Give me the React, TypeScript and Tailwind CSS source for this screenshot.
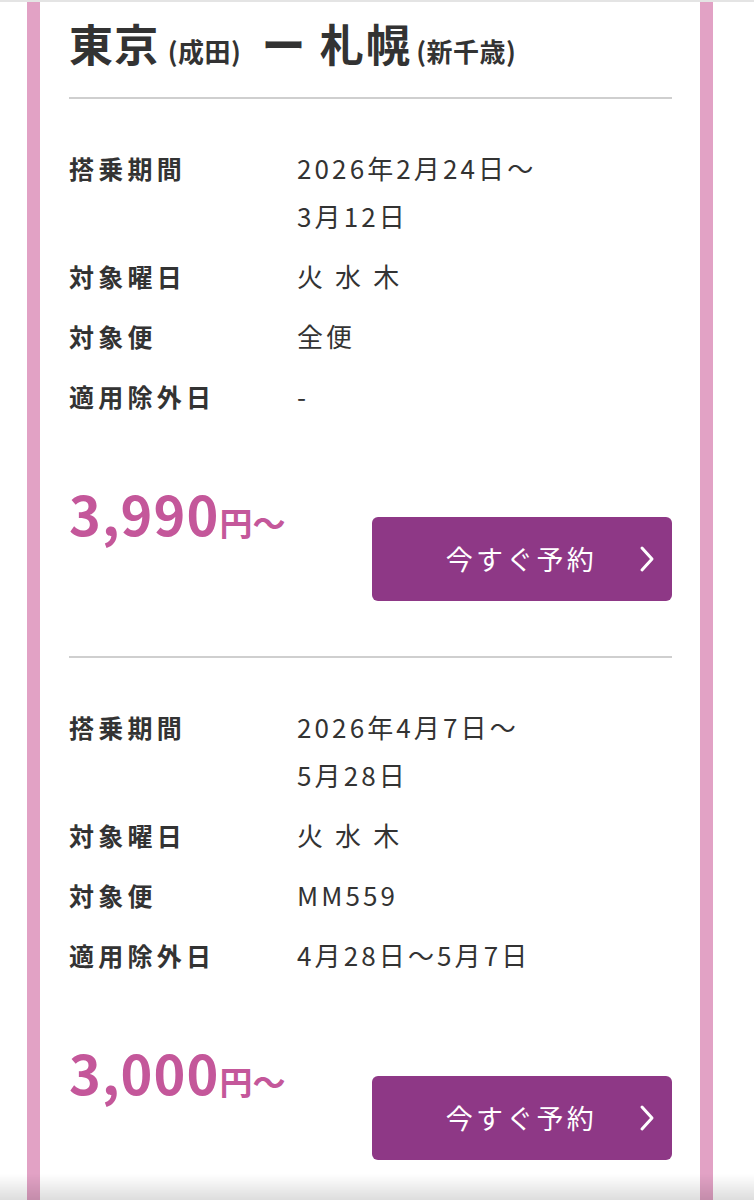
const plans = [
  {
    period: ["2026年2月24日〜", "3月12日"],
    days: "火 水 木",
    flights: "全便",
    excluded: "-",
    price: "3,990",
  },
  {
    period: ["2026年4月7日〜", "5月28日"],
    days: "火 水 木",
    flights: "MM559",
    excluded: "4月28日〜5月7日",
    price: "3,000",
  },
];

const Row = ({ label, lines }: { label: string; lines: string[] }) => (
  <div className="flex items-start mt-[12px] first:mt-0">
    <div className="w-[228px] shrink-0 text-[25px] leading-[48px] font-bold tracking-[0.17em] text-[#333]">
      {label}
    </div>
    <div className="text-[26px] leading-[48px] tracking-[0.12em] text-[#333]">
      {lines.map((l) => (
        <div key={l}>{l}</div>
      ))}
    </div>
  </div>
);

const Chevron = () => (
  <svg width="18" height="28" viewBox="0 0 18 28" fill="none">
    <path d="M4 3l10 11-10 11" stroke="#fff" strokeWidth="3" strokeLinecap="round" strokeLinejoin="round" />
  </svg>
);

const Plan = ({ p }: { p: (typeof plans)[number] }) => (
  <div className="border-t-2 border-[#cfcfcf] pt-[45px] pb-[55px]">
    <Row label="搭乗期間" lines={p.period} />
    <Row label="対象曜日" lines={[p.days]} />
    <Row label="対象便" lines={[p.flights]} />
    <Row label="適用除外日" lines={[p.excluded]} />
    <div className="mt-[63px] flex items-start justify-between">
      <div className="leading-[60px] font-bold text-[#c4579a]">
        <span className="text-[54px] tracking-[0.02em]">{p.price}</span>
        <span className="text-[33px]">円〜</span>
      </div>
      <button className="mt-[34px] w-[300px] h-[84px] rounded-[6px] bg-[#8e3886] flex items-center justify-end pr-[16px] text-white">
        <span className="text-[27px] tracking-[0.12em] mr-[41px]">今すぐ予約</span>
        <Chevron />
      </button>
    </div>
  </div>
);

export default function App() {
  return (
    <div
      className="min-h-[1200px] bg-white border-t-2 border-[#e4e4e4] pl-[27px] pr-[41px]"
      style={{ fontFamily: '"Noto Sans CJK JP", "Noto Sans", sans-serif' }}
    >
      <div className="min-h-[1300px] border-x-[13px] border-[#e2a2c5] pl-[29px] pr-[28px]">
        <h2 className="pt-[13px] h-[95px] leading-[56px] font-bold text-[#333] whitespace-nowrap">
          <span className="text-[44px] tracking-[0.03em]">東京</span>
          <span className="text-[26px] leading-none tracking-[0.02em] ml-[8px]">(成田)</span>
          <span className="text-[44px] tracking-[0.05em] ml-[20px]">ー 札幌</span>
          <span className="text-[26px] leading-none tracking-[0.02em] ml-[4px]">(新千歳)</span>
        </h2>
        {plans.map((p) => (
          <Plan key={p.price} p={p} />
        ))}
      </div>
      <div className="pointer-events-none fixed inset-x-0 bottom-0 h-[26px] bg-gradient-to-b from-transparent to-[#00000022]" />
    </div>
  );
}
